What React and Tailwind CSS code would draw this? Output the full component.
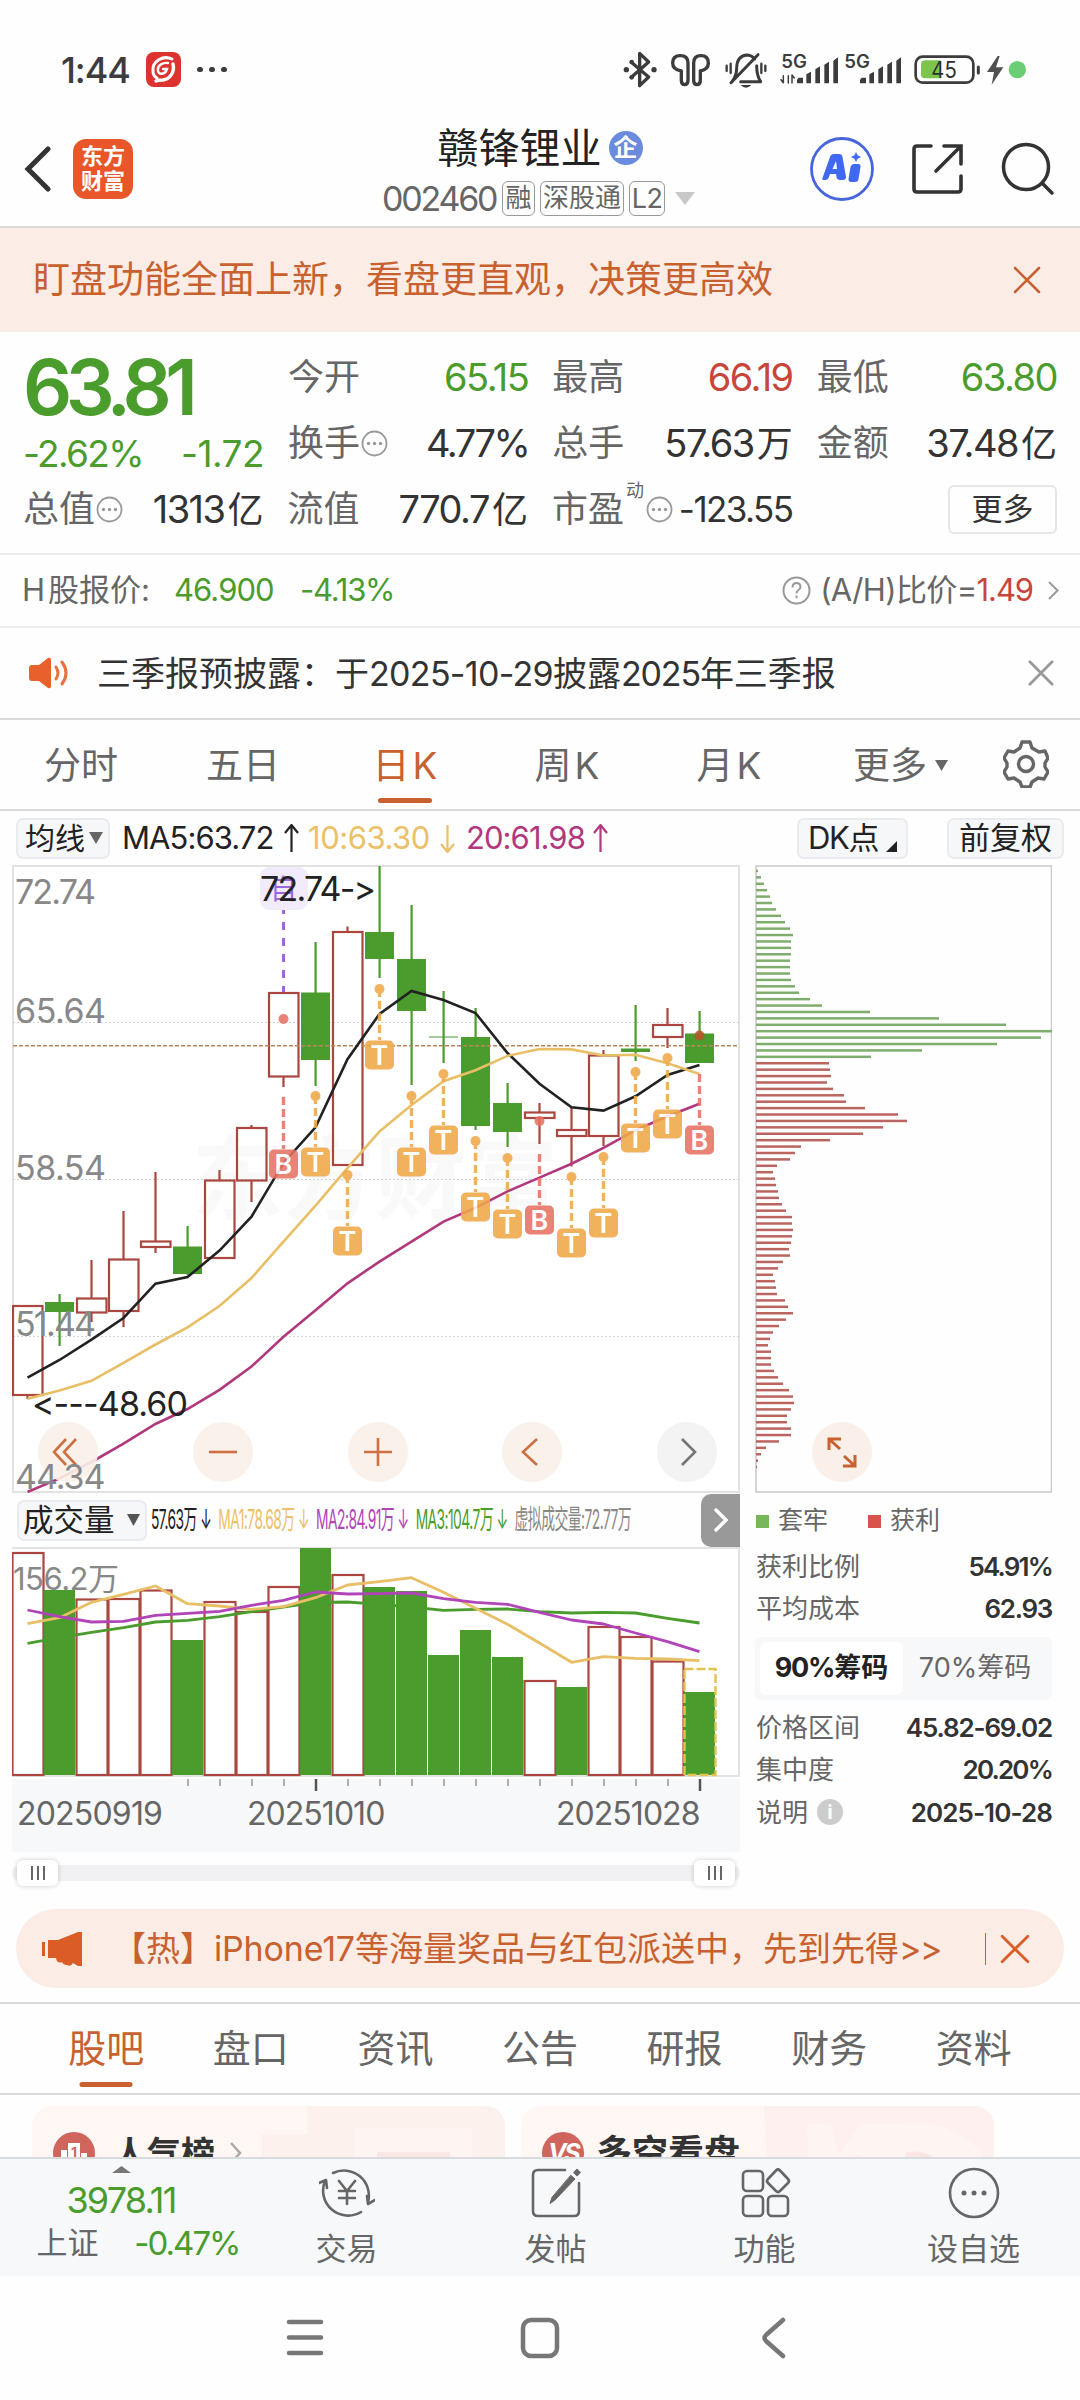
import React from 'react';
import clsx from 'clsx';

const GREEN = '#4a9c2d';
const RED = '#ab4640';

// [up, bodyTop, bodyBottom, wickTop, wickBottom]
const candles = [
  [1, 1306, 1395, 1306, 1399],
  [0, 1302, 1312, 1294, 1346],
  [1, 1298.5, 1312.5, 1260, 1322],
  [1, 1259.5, 1311, 1211, 1327],
  [1, 1241.5, 1247, 1172, 1253],
  [0, 1246.5, 1274, 1226, 1275],
  [1, 1180.5, 1258, 1170, 1258],
  [1, 1128, 1180.5, 1125, 1202],
  [1, 993, 1076.5, 993, 1087],
  [0, 992.5, 1060, 942, 1086],
  [1, 932, 1165, 926.5, 1165],
  [0, 932, 959, 866, 978],
  [0, 959, 1011, 905, 1085],
  [0, 1036.5, 1037.5, 991, 1063],
  [0, 1037, 1126, 1008, 1130],
  [0, 1103, 1132, 1083, 1147],
  [1, 1112.5, 1118, 1103, 1144],
  [1, 1130, 1136, 1107, 1166.5],
  [1, 1055.5, 1136, 1050, 1146],
  [0, 1048.5, 1052, 1005, 1061],
  [1, 1025, 1037, 1008, 1048],
  [0, 1033.5, 1063, 1011, 1063],
];

const ma5 = [1377.6, 1360, 1339.6, 1318, 1283.7, 1277.1, 1250.6, 1216.7, 1162.9, 1127.3, 1059.2, 1013.9, 991, 1000, 1013, 1053, 1083.7, 1107.3, 1110.6, 1096.3, 1075, 1064.9];
const ma10 = [1398.8, 1390.6, 1380.8, 1362.9, 1344.5, 1327.3, 1306, 1278, 1241.6, 1205.7, 1168.2, 1131.4, 1104.9, 1081.2, 1070.2, 1055.9, 1049, 1049.4, 1055.5, 1054.7, 1063.3, 1073.9];
const ma20 = [1492, 1478.4, 1462, 1443.7, 1424, 1409, 1389.8, 1366.5, 1336.7, 1310.2, 1283.3, 1261.6, 1241.6, 1221.6, 1207.8, 1191.4, 1177.6, 1163.7, 1147.8, 1130.2, 1116.3, 1103.7];

// [index, kind, dotY, dashTop, labelCenterY]
const marks = [
  [8, 'B', 1019, 1097, 1164],
  [9, 'T', 1096, 1096, 1162],
  [10, 'T', 1175, 1175, 1241],
  [11, 'T', 989, 989, 1055],
  [12, 'T', 1096, 1096, 1162],
  [13, 'T', 1074, 1074, 1140],
  [14, 'T', 1141, 1141, 1207],
  [15, 'T', 1158, 1158, 1224],
  [16, 'B', 1121, 1154, 1220],
  [17, 'T', 1177, 1177, 1243],
  [18, 'T', 1157, 1157, 1223],
  [19, 'T', 1072, 1072, 1138],
  [20, 'T', 1058, 1058, 1124],
  [21, 'B', 1035.5, 1074, 1140],
];

const volumes = [
  [1, 1553], [0, 1590], [1, 1599.5], [1, 1599], [1, 1590.5], [0, 1640], [1, 1602], [1, 1612],
  [1, 1587], [0, 1548], [1, 1575], [0, 1587], [0, 1591], [0, 1655], [0, 1630], [0, 1657],
  [1, 1681], [0, 1687], [1, 1627], [1, 1637], [1, 1661.5], [0, 1692],
];
const vma1 = [1623.7, 1617.7, 1602.3, 1594.3, 1586, 1603.7, 1606, 1609.3, 1606.7, 1597.7, 1585, 1581.7, 1577.7, 1592.3, 1608.3, 1624.3, 1643, 1662.3, 1656.7, 1658.3, 1659, 1660.7];
const vma2 = [1610, 1616.7, 1622, 1621.3, 1615.3, 1613.3, 1611.3, 1605.3, 1600.3, 1592, 1594, 1593.7, 1593, 1598.7, 1602.3, 1604.3, 1612.3, 1620, 1624, 1633, 1641.7, 1651.7];
const vma3 = [1643.3, 1637.7, 1632.3, 1627.7, 1622, 1620.3, 1616.7, 1611.7, 1607, 1602.3, 1602, 1604.3, 1607, 1610.3, 1609.3, 1609, 1611.7, 1613, 1612.3, 1613, 1618.3, 1623];

const trapped = [2, 5, 8, 11, 14, 16, 20, 25, 29, 34, 37, 35, 35, 35, 34, 34, 34, 35, 39, 43, 54, 66, 114, 183, 250, 296, 285, 241, 166, 115];
const profit = [73, 74, 75, 71, 77, 88, 90, 109, 142, 151, 127, 107, 74, 45, 39, 34, 21, 17, 19, 20, 22, 23, 26, 30, 36, 36, 37, 36, 35, 33, 34, 27, 22, 17, 19, 20, 21, 29, 32, 37, 30, 23, 17, 14, 12, 15, 15, 15, 18, 22, 27, 33, 37, 38, 35, 31, 31, 35, 35, 23, 10, 5, 2, 1];

const cx = (i) => 27.5 + i * 32;
const line = (ys) => ys.map((y, i) => `${cx(i)},${y}`).join(' ');

function Num({ className = 'tracking-[-0.045em]', children }) {
  return <span className={clsx('whitespace-nowrap', className)}>{children}</span>;
}

function Close({ size, className, w = 2 }) {
  return (
    <svg width={size} height={size} viewBox="0 0 28 28" className={className} fill="none" stroke="currentColor" strokeWidth={w} strokeLinecap="round">
      <path d="M2 2 26 26M26 2 2 26" />
    </svg>
  );
}

function Dots() {
  return (
    <svg width="27" height="27" viewBox="0 0 27 27" className="text-[#999]">
      <circle cx="13.5" cy="13.5" r="12" fill="none" stroke="currentColor" strokeWidth="1.8" />
      <g fill="currentColor"><circle cx="7.5" cy="13.5" r="1.7" /><circle cx="13.5" cy="13.5" r="1.7" /><circle cx="19.5" cy="13.5" r="1.7" /></g>
    </svg>
  );
}

function Signal({ x }) {
  return (
    <g fill="#3c3c3c" stroke="none">
      <path d={`M${x} 129v-11l5-6h13v17z`} />
      <path d={`M${x + 28} 129v-27l14-8v35zM${x + 55} 129v-42l14-9v51zM${x + 82} 129v-56l14-9v65zM${x + 109} 129v-68l14-10v78z`} />
    </g>
  );
}

function StatusBar() {
  return (
    <div className="h-[106px] pt-[34px] flex items-center pl-[61px] pr-[50px] text-[#3c3c3c] shrink-0">
      <div className="flex items-center flex-1 -mt-px">
        <Num className="text-[36px] font-medium w-[85px] tracking-[-0.03em]">1:44</Num>
        <svg width="35" height="35" viewBox="0 0 35 35">
          <rect width="35" height="35" rx="8" fill="#dc3331" />
          <g fill="none" stroke="#fff" strokeLinecap="round">
            <path d="M26 7C17 3 6 9 7 19c0 3 2 6 4 7" strokeWidth="3" />
            <path d="M27 12c2 8-3 15-10 16-3 0-5 0-7 1" strokeWidth="3.4" />
            <path d="M22 11c-6-1-11 3-10 8 1 4 7 4 9-2h-4" strokeWidth="2.4" />
          </g>
        </svg>
        <div className="flex gap-[6.5px] ml-4">
          <i className="size-[5.5px] rounded-full bg-[#3c3c3c]" />
          <i className="size-[5.5px] rounded-full bg-[#3c3c3c]" />
          <i className="size-[5.5px] rounded-full bg-[#3c3c3c]" />
        </div>
      </div>
      <svg width="420" height="46" viewBox="0 20 1260 138" fill="none" stroke="#3c3c3c" strokeWidth="10" strokeLinecap="round" strokeLinejoin="round">
        <path d="M64 66l52 44-27 26V39l27 26-52 46" />
        <g fill="#3c3c3c" stroke="none"><circle cx="49" cy="88" r="8" /><circle cx="132" cy="88" r="8" /><circle cx="65" cy="65" r="7" /><circle cx="65" cy="111" r="7" /></g>
        <path d="M214 92v28q0 13 10 13t10-13V68q0-22-23-22t-23 22q0 20 26 24M271 92v28q0 13-10 13t-10-13V68q0-22 22-22t22 22q0 20-24 24" />
        <path d="M366 124q14-18 14-40 0-36 29-40 16 0 25 12M440 76q0 30 12 48h-60M444 43 363 127" strokeWidth="9" />
        <path d="M392 134q16 16 32 0z" fill="#3c3c3c" stroke="none" />
        <path d="M350 76v16M362 70v28M454 70v28M466 76v16" strokeWidth="7" />
        <g fill="#3c3c3c" stroke="none" fontFamily="Inter" fontWeight="600" fontSize="54">
          <text x="514" y="83" textLength="77" lengthAdjust="spacingAndGlyphs">5G</text>
          <text x="703" y="83" textLength="77" lengthAdjust="spacingAndGlyphs">5G</text>
        </g>
        <path d="M513 118l7 9v-21M535 106v22M546 128v-24l7 9" strokeWidth="4.5" />
        <Signal x={561} />
        <Signal x={750} />
        <rect x="917" y="49" width="173" height="78" rx="21" strokeWidth="8" />
        <path d="M945 60h46v54h-46q-12 0-12-13V73q0-13 12-13z" fill="#7dc44c" stroke="none" />
        <path d="M1105 80v18" strokeWidth="9" />
        <text x="964" y="113" fill="#2d2d2d" stroke="none" fontFamily="Inter" fontSize="67" textLength="76" lengthAdjust="spacingAndGlyphs">45</text>
        <path d="M1163 47l-32 48h21l-7 38 35-52h-22l11-34z" fill="#505050" stroke="none" />
        <circle cx="1222" cy="88" r="26" fill="#6bce74" stroke="none" />
      </svg>
    </div>
  );
}

function Header() {
  return (
    <header className="h-[122px] border-b-2 border-[#dadada] flex items-start shrink-0">
      <div className="flex items-center w-[340px] pl-[23px] pt-[33px]">
        <svg width="28" height="48" viewBox="0 0 28 48" fill="none" stroke="#333" strokeWidth="5" strokeLinecap="round"><path d="M25 4 5 24 25 44" /></svg>
        <div className="ml-[22px] size-[60px] rounded-[13px] bg-[#e8562a] text-white font-bold text-[22px] leading-[25px] flex flex-col items-center justify-center">
          <span>东方</span>
          <span>财富</span>
        </div>
      </div>
      <div className="w-[400px] flex flex-col items-center">
        <div className="flex items-center h-[62px] pt-[22px]">
          <span className="text-[41px] text-[#222] leading-none">赣锋锂业</span>
          <span className="size-[34px] ml-[7px] rounded-full bg-[#6a8bde] text-white text-[24px] font-bold leading-[33px] text-center">企</span>
        </div>
        <div className="flex items-center h-[36px] mt-[12px] mr-[3px] gap-[5px] text-[#666] text-[26px] leading-[31px]">
          <Num className="text-[34px] tracking-[-0.065em] w-[115px]">002460</Num>
          <span className="border-[1.5px] border-[#999] rounded-[6px] w-[33px] h-[35px] text-center">融</span>
          <span className="border-[1.5px] border-[#999] rounded-[6px] w-[84px] h-[35px] text-center">深股通</span>
          <span className="border-[1.5px] border-[#999] rounded-[6px] w-[36px] h-[35px] flex items-center justify-center text-[27px] tracking-tight">L2</span>
          <svg width="20" height="13" viewBox="0 0 20 13" className="ml-[5px]"><path d="M0 0h20L10 13z" fill="#c8c8c8" /></svg>
        </div>
      </div>
      <div className="flex items-center pl-[70px] pt-[31px]">
        <svg width="64" height="64" viewBox="0 0 64 64">
          <circle cx="32" cy="32" r="30.5" fill="none" stroke="#4766dc" strokeWidth="2.8" />
          <path fillRule="evenodd" fill="#4168f0" d="M12.500 41 20 20q1-3 4-3h5q3 0 3.500 3l3.500 20q0 3-3 3h-3q-3 0-3.500-3l-.5-3h-6l-1.500 4q-1 2-3.500 2h-1q-2.500 0-1.500-2zm10-9h4.500l-1-8z" />
          <path d="M40.500 30q1-3 3.500-3h4q3 0 2.500 3l-2 12q-.5 3-3.500 3h-4q-2.500 0-2.500-3z" fill="#4168f0" />
          <path d="m46 15.500 1.500 3L50.500 20l-3 1.500-1.500 3-1.500-3-3-1.500 3-1.500z" fill="#4168f0" stroke="#4168f0" strokeWidth="0.5" />
        </svg>
        <svg width="52" height="52" viewBox="0 0 52 52" className="ml-[37px]" fill="none" stroke="#333" strokeWidth="3.600" strokeLinecap="round">
          <path d="M20 3H6Q3 3 3 6v40q0 3 3 3h41q3 0 3-3V33M33 3h17v18M49 4 25 28" />
        </svg>
        <svg width="54" height="54" viewBox="0 0 54 54" className="ml-[38px]" fill="none" stroke="#333" strokeWidth="3.500" strokeLinecap="round">
          <circle cx="25" cy="25" r="22.500" /><path d="m41 41 10 10" />
        </svg>
      </div>
    </header>
  );
}

function Cell({ label, dots, value, unit, className = 'text-[#333]' }) {
  return (
    <div className="flex items-center justify-between">
      <span className="flex items-center gap-px text-[#666]">{label}{dots && <Dots />}</span>
      <span className={className}><Num className={clsx('text-[38px]', value.includes('%') ? 'tracking-[-0.065em]' : 'tracking-[-0.04em]')}>{value}</Num>{unit && <span className="ml-[3px]">{unit}</span>}</span>
    </div>
  );
}

function Quote() {
  return (
    <section className="h-[223px] border-b-2 border-[#ececec] px-[23px] pt-[12px] text-[36px] shrink-0">
      <div className="flex gap-6">
        <div className="w-[241px] text-[#4a9c2d]">
          <div className="h-[87px] flex items-center"><Num className="text-[77px] font-semibold tracking-[-0.085em] leading-none">63.81</Num></div>
          <div className="h-[46px] flex items-center justify-between text-[37px]">
            <Num>-2.62%</Num>
            <Num className="tracking-[-0.015em]">-1.72</Num>
          </div>
        </div>
        <div className="grid grid-cols-3 auto-rows-[66px] gap-x-6 w-[769px]">
          <Cell label="今开" value="65.15" className="text-[#4a9c2d]" />
          <Cell label="最高" value="66.19" className="text-[#c8453a]" />
          <Cell label="最低" value="63.80" className="text-[#4a9c2d]" />
          <Cell label="换手" dots value="4.77%" />
          <Cell label="总手" value="57.63" unit="万" />
          <Cell label="金额" value="37.48" unit="亿" />
        </div>
      </div>
      <div className="grid grid-cols-4 gap-x-6 h-[64px] w-[1034px]">
        <Cell label="总值" dots value="1313" unit="亿" />
        <Cell label="流值" value="770.7" unit="亿" />
        <div className="flex items-center justify-between">
          <span className="flex items-center text-[#666]">市盈<span className="text-[18px] leading-none -mt-9 mx-[2px]">动</span><Dots /></span>
          <Num className="text-[35px] text-[#333] tracking-[-0.045em]">-123.55</Num>
        </div>
        <div className="flex items-center justify-end">
          <span className="w-[109px] h-[49px] border-2 border-[#e6e6e6] rounded-[6px] text-[31px] leading-[44px] text-center text-[#333]">更多</span>
        </div>
      </div>
    </section>
  );
}

function HShare() {
  return (
    <section className="h-[73px] border-b-2 border-[#ececec] flex items-center pl-[22px] pr-[21px] text-[31px] text-[#666] shrink-0">
      <span className="w-[152px] whitespace-nowrap">H<span className="ml-[3px]">股报价:</span></span>
      <Num className="w-[126px] text-[#4a9c2d] tracking-[-0.03em]">46.900</Num>
      <Num className="text-[#4a9c2d] tracking-[-0.04em]">-4.13%</Num>
      <svg className="ml-auto mr-[9px]" width="29" height="29" viewBox="0 0 29 29" fill="none" stroke="#999" strokeWidth="2">
        <circle cx="14.500" cy="14.500" r="13" />
        <path d="M10.500 11.500q0-4.500 4-4.500t4 3.800q0 2-2 3.200t-2 3.500M14.500 19.500v2.800" />
      </svg>
      <span className="tracking-[-0.02em]">(A/H)比价=</span>
      <Num className="text-[#c8453a] tracking-[-0.035em]">1.49</Num>
      <svg className="ml-[15px]" width="11" height="19" viewBox="0 0 11 19" fill="none" stroke="#999" strokeWidth="2"><path d="m1 1 8.500 8.500L1 18" /></svg>
    </section>
  );
}

function Notice() {
  return (
    <section className="h-[92px] border-b-2 border-[#dadada] flex items-center pl-[29px] pr-[26px] shrink-0">
      <svg width="40" height="32" viewBox="0 0 40 32" fill="#e8612c">
        <path d="M3 8h7L19 1q3-1 3 2v26q0 3-3 2l-9-7H3q-3 0-3-3V11q0-3 3-3z" />
        <path d="M27 10q4 6 0 12M33 5q8 11 0 22" fill="none" stroke="#e8713f" strokeWidth="3" strokeLinecap="round" />
      </svg>
      <span className="ml-[28px] text-[34px] text-[#333] whitespace-nowrap flex">三季报预披露：于<Num className="tracking-[-0.02em]">2025-10-29</Num>披露<Num className="tracking-[-0.035em]">2025</Num>年三季报</span>
      <Close size={26} className="ml-auto text-[#999]" w={3} />
    </section>
  );
}

function PeriodTabs() {
  return (
    <nav className="h-[91px] border-b-2 border-[#dadada] flex text-[37px] text-[#666] shrink-0">
      {['分时', '五日', '日K', '周K', '月K'].map((t) => (
        <div key={t} className={clsx('w-[162px] pt-[20px] text-center relative leading-[52px]', t === '日K' && 'text-[#c8612f]')}>
          {t[1] === 'K' ? <>{t[0]}<span className="ml-[3px]">K</span></> : t}
          {t === '日K' && <i className="absolute left-1/2 -translate-x-1/2 bottom-[6px] w-[54px] h-[5px] rounded-full bg-[#c8612f]" />}
        </div>
      ))}
      <div className="ml-[43px] pt-[20px] leading-[52px] flex">
        更多
        <svg width="13" height="11" viewBox="0 0 13 11" className="mt-[20px] ml-[8px]"><path d="M0 0h13L6.500 11z" fill="#666" /></svg>
      </div>
      <svg width="46" height="48" viewBox="0 0 46 48" className="mt-[20px] ml-auto mr-[31px]" fill="none" stroke="#666" strokeWidth="3.400" strokeLinejoin="round">
        <path d="M19 2h8l2 6 7 4 6-1 3 7-3 5v4l3 5-4 7-6-1-6 4-2 5h-8l-2-5-6-4-6 1-4-7 3-5v-4l-3-5 4-7 6 1 6-4z" />
        <circle cx="23" cy="24" r="7.500" />
      </svg>
    </nav>
  );
}

function Chip({ className, children }) {
  return <span className={clsx('h-[41px] border-2 border-[#e9ebee] bg-[#f6f7f9] rounded-[7px] text-[#222] flex items-center whitespace-nowrap', className)}>{children}</span>;
}

function Arrow({ down, className }) {
  return (
    <svg width="15" height="29" viewBox="0 0 15 29" className={className} fill="none" stroke="currentColor" strokeWidth="2.200">
      <path d={down ? 'M7.500 1v26M1 20l6.500 8 6.500-8' : 'M7.500 28V2M1 9l6.500-8L14 9'} />
    </svg>
  );
}

function IndicatorRow() {
  return (
    <div className="h-[54px] flex items-center pl-4 pr-4 text-[31px] shrink-0">
      <Chip className="w-[94px] pl-[7px] text-[30px]">
        均线
        <svg width="14" height="12" viewBox="0 0 14 12" className="ml-[4px]"><path d="M0 0h14L7 12z" fill="#666" /></svg>
      </Chip>
      <Num className="ml-[12px] w-[162px] text-[#222] tracking-[-0.03em]">MA5:63.72</Num>
      <Arrow className="text-[#222]" />
      <Num className="ml-[9px] w-[132px] text-[#ecc068] tracking-[-0.015em]">10:63.30</Num>
      <Arrow down className="text-[#ecc068]" />
      <Num className="ml-[11px] w-[127px] text-[#b1387c] tracking-[-0.03em]">20:61.98</Num>
      <Arrow className="text-[#b1387c]" />
      <Chip className="w-[111px] ml-auto mr-[39px] pl-[9px]">
        <Num>DK</Num>点
        <svg width="11" height="11" viewBox="0 0 11 11" className="ml-[7px] mt-[17px]"><path d="M11 0v11H0z" fill="#222" /></svg>
      </Chip>
      <Chip className="w-[117px] justify-center">前复权</Chip>
    </div>
  );
}

function KLine() {
  return (
    <svg width="728" height="628" viewBox="12 865 728 628" className="block" fontFamily="Inter, 'Noto Sans CJK SC', sans-serif">
      <rect x="13" y="866" width="726" height="626" fill="#fff" stroke="#e2e2e2" strokeWidth="2" />
      <text x="192" y="1212" fontSize="91" fontWeight="700" fill="#f9f9f9" textLength="366">东方财富</text>
      {[1022.5, 1179.5, 1336.5].map((y) => <path key={y} d={`M13 ${y}H739`} stroke="#d4d4d4" strokeDasharray="2 2" />)}
      <g fontSize="34" fill="#888">
        <text x="15" y="904" textLength="81">72.74</text>
        <text x="15" y="1023" textLength="91">65.64</text>
        <text x="15" y="1180" textLength="91">58.54</text>
      </g>
      <rect x="260" y="867" width="48" height="43" rx="9" fill="#f1ebfc" />
      <text x="270" y="899" fontSize="27" fill="#9a68dc">自</text>
      <path d="M283.500 910V993" stroke="#9a68dc" strokeWidth="3" strokeDasharray="8 8" strokeDashoffset="4" />
      {candles.map(([up, t, b, wt, wb], i) => (up ? (
        <g key={i} stroke={RED} strokeWidth="2.200" fill="none">
          <path d={`M${cx(i)} ${wt}V${t}M${cx(i)} ${b}V${wb}`} />
          <rect x={cx(i) - 14.5} y={t} width="29.500" height={b - t} />
        </g>
      ) : (
        <g key={i} fill={GREEN}>
          <rect x={cx(i) - 1} y={wt} width="2.200" height={wb - wt} />
          <rect x={cx(i) - 14.5} y={t} width="29" height={b - t} />
        </g>
      )))}
      <text x="15" y="1336" fontSize="34" fill="#888" textLength="81">51.44</text>
      <path d="M13 1045.700H739" stroke="#b98558" strokeWidth="1.400" strokeDasharray="4 2" />
      <g fill="none" strokeWidth="2.600">
        <polyline points={line(ma5)} stroke="#222" />
        <polyline points={line(ma10)} stroke="#e9bf66" />
        <polyline points={line(ma20)} stroke="#b1387c" />
      </g>
      {marks.map(([i, kind, dot, top, y]) => {
        const color = kind === 'B' ? '#e67264' : '#f0a848';
        return (
          <g key={i} opacity="0.880">
            <circle cx={cx(i)} cy={dot} r="5" fill={i === 21 ? '#b8572a' : color} />
            <path d={`M${cx(i)} ${top}V${y - 15}`} stroke={color} strokeWidth="3.400" strokeDasharray="8 4" />
            <rect x={cx(i) - 14.5} y={y - 14.5} width="29" height="29" rx="5" fill={color} />
            <text x={cx(i)} y={y + 9.5} fontSize="27" fontWeight="600" fill="#fff" textAnchor="middle">{kind}</text>
          </g>
        );
      })}
      <g fontSize="34" fill="#222">
        <text x="260" y="901" textLength="116">72.74-&gt;</text>
        <text x="32" y="1416" textLength="156">&lt;---48.60</text>
      </g>
    </svg>
  );
}

const zoomIcons = [
  ['bg-[#fbf0e9] text-[#c8612f]', 'M28 17 16 30l12 13M38 17 26 30l12 13'],
  ['bg-[#fbf0e9] text-[#c8612f]', 'M16 30h28'],
  ['bg-[#fbf0e9] text-[#c8612f]', 'M16 30h28M30 16v28'],
  ['bg-[#fbf0e9] text-[#c8612f]', 'M35 17 21 30l14 13'],
  ['bg-[#f2f2f2] text-[#666]', 'M25 17 38 30 25 43'],
];

function VolumeChart() {
  return (
    <svg width="728" height="245" viewBox="12 1547 728 245" className="block bg-white">
      <rect x="12" y="1779" width="728" height="13" fill="#f7f8fa" />
      <path d="M12 1548H739V1776H12" fill="none" stroke="#e2e2e2" strokeWidth="2" />
      {volumes.map(([up, y], i) => (up
        ? <rect key={i} x={cx(i) - 15} y={y} width="31" height={1775 - y} fill="#fff" stroke={RED} strokeWidth="2.200" />
        : <rect key={i} x={cx(i) - 15.5} y={y} width="31" height={1775 - y} fill={GREEN} />))}
      <rect x="684.500" y="1669" width="31" height="106" fill="none" stroke="#e3c352" strokeWidth="2.400" strokeDasharray="9 3" />
      <text x="13" y="1590" fontSize="31" fill="#888" fontFamily="Inter, 'Noto Sans CJK SC', sans-serif" textLength="106">156.2万</text>
      <g fill="none" strokeWidth="2.800" strokeLinejoin="round">
        <polyline points={line(vma3)} stroke="#4a9c2d" />
        <polyline points={line(vma1)} stroke="#e9bf66" />
        <polyline points={line(vma2)} stroke="#b044b8" />
      </g>
      {volumes.map((_, i) => i >= 5 && (
        <path key={i} d={`M${cx(i) + 0.5} 1779v${i === 9 || i === 21 ? 12 : 7}`} stroke={i === 9 || i === 21 ? '#555' : '#999'} strokeWidth={i === 9 || i === 21 ? 2.5 : 1.5} />
      ))}
    </svg>
  );
}

function Handle() {
  return (
    <span className="w-[41px] h-[26px] rounded-[6px] bg-white shadow-[0_0_5px_rgba(0,0,0,0.2)] flex items-center justify-center gap-[4px]">
      <i className="w-[2px] h-[14px] bg-[#666]" /><i className="w-[2px] h-[14px] bg-[#666]" /><i className="w-[2px] h-[14px] bg-[#666]" />
    </span>
  );
}

function LeftCharts() {
  return (
    <div className="w-[728px]">
      <div className="relative">
        <KLine />
        <div className="absolute left-[26px] right-[23px] bottom-[11px] flex justify-between">
          {zoomIcons.map(([cls, d]) => (
            <span key={d} className={clsx('size-[60px] rounded-full opacity-90', cls)}>
              <svg width="60" height="60" viewBox="0 0 60 60" fill="none" stroke="currentColor" strokeWidth="2.600"><path d={d} /></svg>
            </span>
          ))}
        </div>
        <span className="absolute left-[3px] bottom-[-2px] text-[34px] leading-[36px] text-[#888] tracking-[-0.03em]">44.34</span>
      </div>
      <div className="h-[54px] flex items-center">
        <Chip className="ml-[5px] w-[130px] pl-[4px] text-[30.500px] shrink-0">
          成交量
          <svg width="13" height="12" viewBox="0 0 13 12" className="ml-[12px]"><path d="M0 0h13L6.500 12z" fill="#555" /></svg>
        </Chip>
        <div className="ml-[4px] w-[550px]">
          <div className="flex w-max origin-left scale-x-[0.513] text-[27px] gap-[14px] whitespace-nowrap tracking-[-0.04em]">
            <span className="text-[#222]">57.63万 ↓</span>
            <span className="text-[#ecc068]">MA1:78.68万 ↓</span>
            <span className="text-[#b044b8]">MA2:84.91万 ↓</span>
            <span className="text-[#4a9c2d]">MA3:104.7万 ↓</span>
            <span className="text-[#888]">虚拟成交量:72.77万</span>
          </div>
        </div>
        <span className="w-[39px] h-[53px] rounded-l-[10px] bg-[#999] flex items-center justify-center shrink-0">
          <svg width="14" height="24" viewBox="0 0 14 24" fill="none" stroke="#fff" strokeWidth="3.500" strokeLinecap="round"><path d="m2 2 10 10L2 22" /></svg>
        </span>
      </div>
      <VolumeChart />
      <div className="h-[60px] bg-[#f7f8fa] flex text-[32px] text-[#666] leading-[44px]">
        <Num className="ml-[5px] w-[230px] tracking-[-0.025em]">20250919</Num>
        <Num className="w-[309px] tracking-[-0.03em]">20251010</Num>
        <Num className="tracking-[-0.03em]">20251028</Num>
      </div>
      <div className="h-[42px] flex items-center">
        <div className="w-[728px] h-[16px] rounded-full bg-[#f1f1f3] flex items-center justify-between px-[5px]">
          <Handle />
          <Handle />
        </div>
      </div>
    </div>
  );
}

function InfoRow({ label, value, info, className = 'tracking-[-0.07em]' }) {
  return (
    <div className="h-[42.500px] flex items-center justify-between text-[26px] text-[#666]">
      <span className="flex items-center ml-px">
        {label}
        {info && <i className="ml-[9px] size-[26px] rounded-full bg-[#ccc] text-white text-[20px] font-bold not-italic leading-[26px] text-center">i</i>}
      </span>
      <Num className={clsx('font-semibold text-[#333]', className)}>{value}</Num>
    </div>
  );
}

function ChipPanel() {
  return (
    <div className="w-[297px] ml-[15px]">
      <div className="relative">
        <svg width="297" height="628" viewBox="755 865 297 628" className="block">
          <rect x="756" y="866" width="295.500" height="626" fill="none" stroke="#cbcbcb" strokeWidth="1.600" />
          {trapped.map((w, i) => <rect key={i} x="756" y={869.7 + i * 6.41} width={w} height="2.500" fill="#7fad6d" />)}
          {profit.map((w, i) => <rect key={i} x="756" y={869.7 + (i + 30) * 6.41} width={w} height="2.500" fill="#bb6560" />)}
        </svg>
        <span className="absolute left-[57px] bottom-[11px] size-[60px] rounded-full bg-[#fbf0e9]">
          <svg width="60" height="60" viewBox="0 0 60 60" fill="none" stroke="#c8612f" strokeWidth="3"><path d="M29 17H17v11M17 17l11 10M31 44h12V33M43 44 32 34" /></svg>
        </span>
      </div>
      <div className="h-[52px] pt-[4px] flex items-center text-[25px] text-[#666]">
        <i className="size-[13px] bg-[#76b75b] mr-[9px] ml-px" />套牢
        <i className="size-[13px] bg-[#d9534c] ml-[40px] mr-[9px]" />获利
      </div>
      <InfoRow label="获利比例" value="54.91%" />
      <InfoRow label="平均成本" value="62.93" className="tracking-[-0.05em]" />
      <div className="mt-[7px] mb-[6px] h-[63px] rounded-[6px] bg-[#f7f8fa] p-[5px] flex text-[27px] text-[#666]">
        <span className="w-[143px] rounded-[6px] bg-white text-[#222] font-bold flex items-center justify-center"><Num>90%</Num>筹码</span>
        <span className="flex-1 flex items-center justify-center"><Num className="tracking-[0em]">70%</Num>筹码</span>
      </div>
      <InfoRow label="价格区间" value="45.82-69.02" className="tracking-[-0.045em]" />
      <InfoRow label="集中度" value="20.20%" />
      <InfoRow label="说明" info value="2025-10-28" className="tracking-[-0.035em]" />
    </div>
  );
}

function Promo() {
  return (
    <div className="mx-4 mt-[15px] h-[79px] rounded-full bg-[#fbede5] text-[#c8612f] flex items-center pl-[26px] pr-[34px] shrink-0">
      <svg width="40" height="34" viewBox="0 0 40 34" fill="#da5c27"><path d="M0 10h3v14H0zM6 8h10L36 0h4v34h-4l-5-3q-2 4-6 2-4 0-5-3-5 2-6-4H6z" /></svg>
      <span className="ml-[30px] text-[34px] whitespace-nowrap flex">【热】<Num className="tracking-[-0.005em]">iPhone17</Num>等海量奖品与红包派送中，先到先得<Num className="tracking-[-0.04em]">&gt;&gt;</Num></span>
      <i className="ml-auto w-px h-[32px] bg-[#c8612f] mr-[14px]" />
      <Close size={30} w={2.6} className="text-[#da5c27]" />
    </div>
  );
}

function SectionTabs() {
  return (
    <nav className="mt-[14px] h-[93px] border-y-2 border-[#dadada] flex px-[34px] text-[38px] text-[#666] shrink-0">
      {['股吧', '盘口', '资讯', '公告', '研报', '财务', '资料'].map((t, i) => (
        <div key={t} className={clsx('flex-1 text-center leading-[88px] relative', i === 0 && 'text-[#c8612f]')}>
          {t}
          {i === 0 && <i className="absolute left-1/2 -translate-x-1/2 bottom-[6px] w-[53px] h-[5px] rounded-full bg-[#c8612f]" />}
        </div>
      ))}
    </nav>
  );
}

function Cards() {
  return (
    <div className="h-[62px] overflow-hidden flex gap-4 pl-8 pt-[11px] shrink-0 text-[#333]">
      <div className="w-[473px] h-[120px] rounded-[20px] bg-[#fef7f4] overflow-hidden shrink-0 relative">
        <svg width="473" height="120" viewBox="0 0 473 120" className="absolute">
          <path d="M230 120V28h45V0h198v120z" fill="#fdf1ee" /><path d="M322 120V22h118v98z" fill="#fef5f3" /><path d="M345 46h73v74h-73z" fill="#fbe8e6" />
        </svg>
        <div className="relative flex items-center h-[94px] pl-[21px]">
          <svg width="42" height="42" viewBox="0 0 42 42">
            <circle cx="21" cy="21" r="21" fill="#cf655c" />
            <path d="M8 18h6v14H8zM15 11h12v21H15zM28 21h6v11h-6z" fill="#fff" />
            <text x="18" y="26" fontSize="14" fontWeight="700" fontFamily="Inter" fill="#cf655c">1</text>
          </svg>
          <span className="ml-[18px] text-[34px] font-bold">人气榜</span>
          <svg className="ml-[15px]" width="12" height="22" viewBox="0 0 12 22" fill="none" stroke="#aaa" strokeWidth="2.500"><path d="m1 1 9 10-9 10" /></svg>
        </div>
      </div>
      <div className="w-[473px] h-[120px] rounded-[20px] bg-[#fef7f4] overflow-hidden shrink-0 relative">
        <svg width="473" height="120" viewBox="0 0 473 120" className="absolute">
          <path d="M243 0h230v120H250z" fill="#fdf0ee" /><path d="M286 18h24l8 30 22-30h40q50-6 82 30l-14 72H290z" fill="#fef5f3" /><path d="M335 48l22 72h-30zM385 46q30-4 36 20l-20 54h-24z" fill="#fbe6e4" />
        </svg>
        <div className="relative flex items-center h-[94px] pl-[21px]">
          <span className="size-[42px] rounded-full bg-[#cf655c] text-white text-[25px] italic font-bold leading-[42px] text-center tracking-[-0.1em]">VS</span>
          <span className="ml-[12px] text-[36px] font-bold">多空看盘</span>
        </div>
      </div>
    </div>
  );
}

function BarItem({ label, children }) {
  return (
    <div className="w-[209px] pt-[7px] flex flex-col items-center">
      <svg width="56" height="54" viewBox="0 0 56 54" fill="none" stroke="#666" strokeWidth="2.600" strokeLinecap="round" strokeLinejoin="round">{children}</svg>
      <span className="text-[31px] leading-[44px] mt-[7px]">{label}</span>
    </div>
  );
}

function BottomBar() {
  return (
    <div className="h-[119px] border-t-2 border-[#d8dbde] bg-[#f6f8fa] flex text-[#666] shrink-0">
      <div className="w-[242px] flex flex-col items-center pt-[7px]">
        <svg width="19" height="7" viewBox="0 0 19 7"><path d="M0 7h19L9.500 0z" fill="#777" /></svg>
        <Num className="text-[36px] leading-[44px] mt-[5px] text-[#4a9c2d] tracking-[-0.05em]">3978.11</Num>
        <div className="flex items-center w-[203px] ml-[34px] justify-between text-[31px] leading-[42px]">
          上证<Num className="text-[33px] text-[#4a9c2d] tracking-[-0.06em]">-0.47%</Num>
        </div>
      </div>
      <BarItem label="交易">
        <path d="M14 7a25 25 0 0 1 35 29M42 46A25 25 0 0 1 6 15M0 17l7-3 1 8M56 34l-7 4-1-8M20 15l8 10 8-10M28 25v13M20 25h16M20 32h16" />
      </BarItem>
      <BarItem label="发帖">
        <path d="M37 4H10q-5 0-5 5v36q0 5 5 5h36q5 0 5-5V17" />
        <path d="M43 9.500 47 13 27 34l-5 3.500 2-6z" fill="#666" strokeWidth="1" />
        <path d="M46 6.500 49 3.500l3 3-3 3z" fill="#666" strokeWidth="1.500" />
      </BarItem>
      <BarItem label="功能">
        <rect x="6" y="5" width="20" height="20" rx="4" /><rect x="6" y="30" width="20" height="20" rx="4" /><rect x="31" y="30" width="20" height="20" rx="4" />
        <path d="M39 4.500q2-2 4 0l8 8.500q2 2 0 4l-8 8q-2 2-4 0l-8-8q-2-2 0-4z" />
      </BarItem>
      <BarItem label="设自选">
        <circle cx="28" cy="27" r="24" /><g fill="#666" stroke="none"><circle cx="18" cy="27" r="2.500" /><circle cx="28" cy="27" r="2.500" /><circle cx="38" cy="27" r="2.500" /></g>
      </BarItem>
    </div>
  );
}

export default function App() {
  return (
    <div className="w-[1080px] h-[2400px] overflow-hidden bg-[#fefefe] flex flex-col font-[Inter,'Noto_Sans_CJK_SC',sans-serif] [font-feature-settings:'calt'_0]">
      <StatusBar />
      <Header />
      <div className="h-[104px] bg-[#fbede5] text-[#c8612f] flex items-center justify-between pl-[33px] pr-[39px] text-[37px] shrink-0">
        盯盘功能全面上新，看盘更直观，决策更高效
        <Close size={28} w={2.6} />
      </div>
      <Quote />
      <HShare />
      <Notice />
      <PeriodTabs />
      <IndicatorRow />
      <div className="flex pl-3 h-[1029px] shrink-0">
        <LeftCharts />
        <ChipPanel />
      </div>
      <Promo />
      <SectionTabs />
      <Cards />
      <BottomBar />
      <div className="flex-1 flex items-center text-[#777]">
        <svg width="1080" height="42" viewBox="0 0 1080 42" fill="none" stroke="#777" strokeWidth="4.500" strokeLinecap="round">
          <path d="M289 5h32M289 20.500h32M289 36h32" />
          <rect x="523" y="3" width="34" height="36" rx="8" />
          <path d="M783 3 766 18q-3 3 0 6l17 15" />
        </svg>
      </div>
    </div>
  );
}
